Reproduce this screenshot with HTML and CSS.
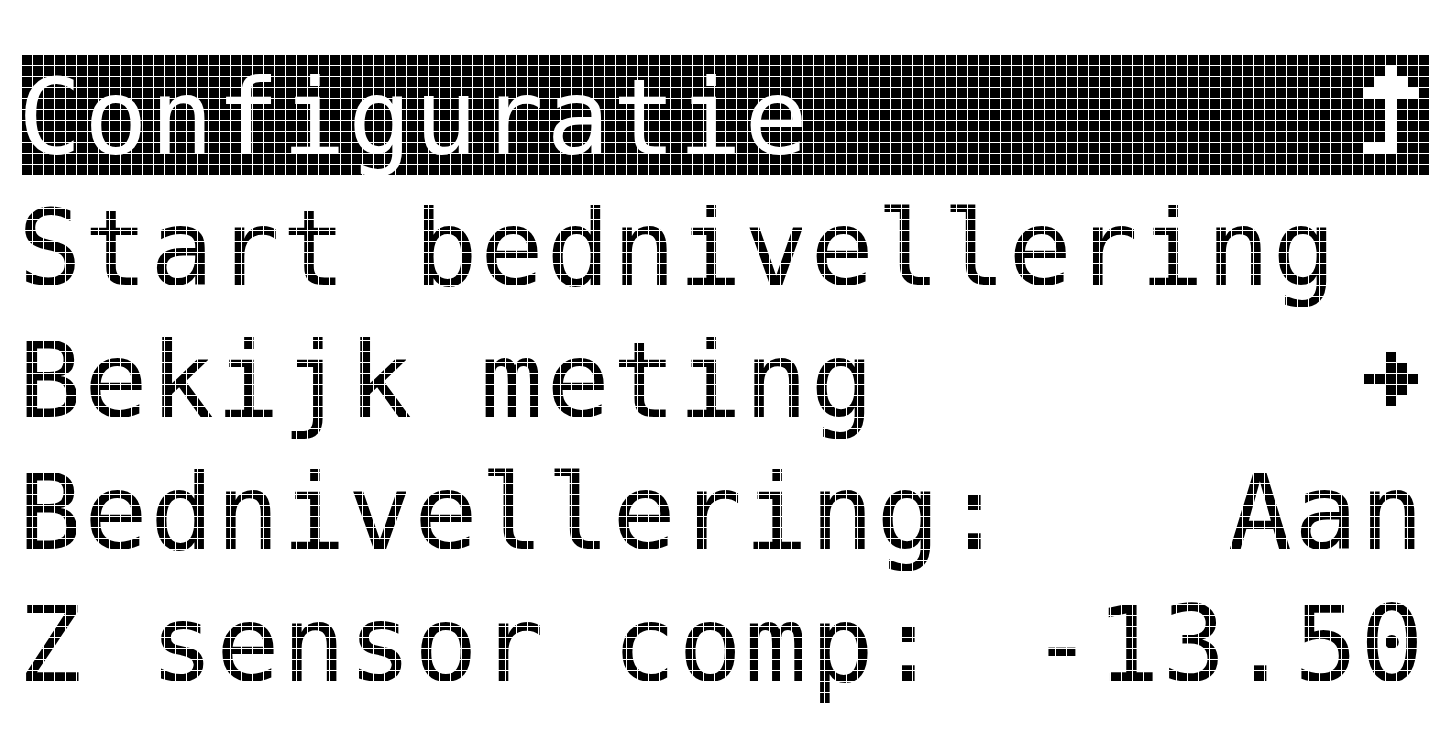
FILE: index.html
```html
<!DOCTYPE html>
<html lang="nl">
<head>
<meta charset="utf-8">
<title>Configuratie</title>
<link rel="stylesheet" href="styles.css">
</head>
<body>
<div class="screen">
  <div class="header">
    <span class="label">Configuratie</span>
    <svg class="icon-up" viewBox="0 0 5 8" width="55" height="88" shape-rendering="crispEdges" aria-hidden="true">
      <rect x="2" y="0" width="1" height="1"/>
      <rect x="1" y="1" width="3" height="1"/>
      <rect x="0" y="2" width="5" height="1"/>
      <rect x="2" y="3" width="1" height="4"/>
      <rect x="0" y="7" width="3" height="1"/>
    </svg>
  </div>
  <div class="menu">
    <div class="item"><span class="label">Start bednivellering</span></div>
    <div class="item">
      <span class="label">Bekijk meting</span>
      <svg class="icon-sub" viewBox="0 0 5 5" width="55" height="55" shape-rendering="crispEdges" aria-hidden="true">
        <rect x="2" y="0" width="1" height="1"/>
        <rect x="2" y="1" width="2" height="1"/>
        <rect x="0" y="2" width="5" height="1"/>
        <rect x="2" y="3" width="2" height="1"/>
        <rect x="2" y="4" width="1" height="1"/>
      </svg>
    </div>
    <div class="item"><span class="label">Bednivellering:</span><span class="value">Aan</span></div>
    <div class="item"><span class="label">Z sensor comp:</span><span class="value">-13.50</span></div>
  </div>
</div>
</body>
</html>
```
FILE: styles.css
```css
html, body {
  margin: 0;
  padding: 0;
  background: #fff;
}

.screen {
  position: relative;
  margin: 22px;
  width: 1408px;
  height: 704px;
  padding-top: 33px;
  box-sizing: border-box;
  font-family: "DejaVu Sans Mono", "Liberation Mono", monospace;
  font-size: 106px;
  letter-spacing: 2.2px;
  color: #000;
}

/* LCD pixel gaps */
.screen::after {
  content: "";
  position: absolute;
  inset: 0;
  pointer-events: none;
  background-image:
    linear-gradient(to right, transparent 10px, #fff 10px),
    linear-gradient(to bottom, transparent 10px, #fff 10px);
  background-size: 11px 11px;
}

.label,
.value {
  white-space: pre;
}

.header {
  display: flex;
  justify-content: space-between;
  align-items: flex-start;
  height: 121px;
  background: #000;
  color: #fff;
}

.header .label {
  line-height: 125px;
  margin-left: -4px;
}

.icon-up {
  display: block;
  fill: #fff;
  margin-top: 11px;
  margin-right: 11px;
}

.menu {
  display: flex;
  flex-direction: column;
  padding-top: 7px;
}

.item {
  display: flex;
  justify-content: space-between;
  align-items: flex-start;
  height: 132px;
  line-height: 132px;
}

.item .label {
  margin-left: -4px;
}

.item .value {
  margin-right: 4px;
}

.icon-sub {
  display: block;
  fill: #000;
  margin-top: 37px;
  margin-right: 11px;
}
```
